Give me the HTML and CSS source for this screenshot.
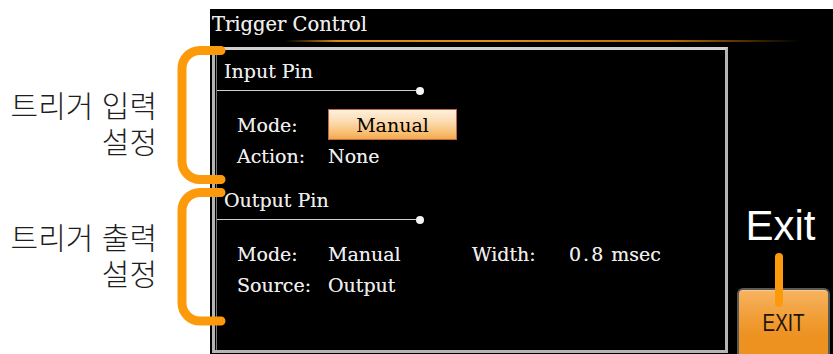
FILE: index.html
```html
<!DOCTYPE html>
<html lang="ko">
<head>
<meta charset="utf-8">
<title>Trigger Control</title>
<link rel="stylesheet" href="styles.css">
</head>
<body>
<div class="page">
  <aside class="notes">
    <p class="note">트리거 입력<br>설정</p>
    <p class="note note-out">트리거 출력<br>설정</p>
  </aside>
  <main class="screen">
    <header class="title">Trigger Control</header>
    <div class="title-rule"></div>
    <div class="body">
      <section class="panel">
        <div class="group">
          <h2 class="group-head">Input Pin</h2>
          <div class="pin-rule"></div>
          <div class="rows">
            <div class="row"><span class="k">Mode:</span><span class="btn-manual">Manual</span></div>
            <div class="row"><span class="k">Action:</span><span class="v">None</span></div>
          </div>
        </div>
        <div class="group">
          <h2 class="group-head">Output Pin</h2>
          <div class="pin-rule"></div>
          <div class="rows">
            <div class="row"><span class="k">Mode:</span><span class="v">Manual</span><span class="k2">Width:</span><span class="v2"><span class="num">0.8</span> msec</span></div>
            <div class="row"><span class="k">Source:</span><span class="v">Output</span></div>
          </div>
        </div>
      </section>
      <aside class="side">
        <div class="exit-label">Exit</div>
        <div class="exit-btn"><span>EXIT</span></div>
      </aside>
    </div>
  </main>
  <svg class="brackets" width="833" height="354" viewBox="0 0 833 354" aria-hidden="true">
    <path d="M221 50.5 H200 A18 18 0 0 0 182 68.5 V161.5 A18 18 0 0 0 200 179.5 H221" />
    <path d="M221 192.5 H200 A18 18 0 0 0 182 210.5 V303 A18 18 0 0 0 200 321 H221" />
  </svg>
  <div class="connector"></div>
</div>
</body>
</html>
```

FILE: styles.css
```css
html, body {
  margin: 0;
  padding: 0;
  background: #fff;
}

.page {
  position: relative;
  display: flex;
  width: 833px;
  height: 354px;
  overflow: hidden;
}

.notes {
  width: 210px;
  flex: none;
  padding-top: 86px;
  box-sizing: border-box;
}

.note {
  margin: 0;
  padding-right: 53px;
  text-align: right;
  font-family: "Noto Sans CJK KR", "Noto Sans", sans-serif;
  font-weight: 300;
  font-size: 30px;
  line-height: 36px;
  color: #1e1e1e;
}

.note-out {
  margin-top: 60px;
}

.screen {
  flex: 1;
  margin-top: 9px;
  height: 345px;
  background: #000;
  overflow: hidden;
  padding-top: 5px;
  box-sizing: border-box;
  font-family: "DejaVu Serif", serif;
  color: #ededed;
  text-shadow: 0 0 0.5px rgba(255,255,255,0.6);
}

.title {
  font-size: 19.5px;
  line-height: 22px;
  padding-left: 2px;
}

.title-rule {
  margin: 4px 0 0 75px;
  width: 515px;
  height: 2px;
  background: linear-gradient(90deg, rgba(200,120,10,0) 0%, #d98810 10%, #e09018 40%, #b86e00 75%, rgba(120,70,0,0) 100%);
}

.body {
  display: flex;
  margin-top: 5px;
  height: 307px;
}

.panel {
  width: 516px;
  height: 306px;
  margin-left: 2px;
  box-sizing: border-box;
  border: 3px solid #b4b4b4;
  border-top-color: #d0d0d0;
  box-shadow: inset 1px 0 0 #000, inset 2px 0 0 #777;
  padding: 10px 0 0 2px;
}

.group + .group {
  margin-top: 18px;
}

.group-head {
  margin: 0;
  font-weight: normal;
  font-size: 19px;
  line-height: 22px;
  padding-left: 7px;
}

.pin-rule {
  position: relative;
  margin-top: 8px;
  width: 203px;
  height: 1px;
  background: #cfcfcf;
}

.pin-rule::after {
  content: "";
  position: absolute;
  right: -4px;
  top: -3.5px;
  width: 8px;
  height: 8px;
  border-radius: 50%;
  background: #f4f4f4;
}

.rows {
  margin-top: 18px;
  padding-left: 20px;
}

.row {
  display: flex;
  align-items: center;
  height: 31px;
  font-size: 19px;
  line-height: 22px;
}

.k {
  width: 91px;
  flex: none;
}

.v {
  width: 144px;
  flex: none;
}

.k2 {
  width: 97px;
  flex: none;
}

.num {
  letter-spacing: 2px;
}

.btn-manual {
  width: 129px;
  height: 31px;
  box-sizing: border-box;
  border: 1px solid #b8684c;
  background: linear-gradient(180deg, #fff0dc 0%, #fcdcb2 40%, #f8bd70 80%, #f4a848 100%);
  color: #000;
  text-shadow: none;
  text-align: center;
  line-height: 30px;
}

.side {
  flex: 1;
  display: flex;
  flex-direction: column;
  padding-top: 158px;
}

.exit-label {
  font-family: "Liberation Sans", Arial, sans-serif;
  font-size: 42px;
  line-height: 42px;
  text-align: center;
  color: #fff;
  text-shadow: none;
}

.exit-btn {
  margin: 41px 0 0 9px;
  width: 93px;
  height: 80px;
  flex: none;
  box-sizing: border-box;
  border: 2px solid #5a5a5a;
  border-radius: 6px;
  background: linear-gradient(180deg, #f7b462 0%, #f3a443 25%, #ee9424 55%, #ec8e1c 100%);
  box-shadow: inset 0 1px 0 #f9c98c;
  padding-top: 22px;
  text-align: center;
  text-shadow: none;
}

.exit-btn span {
  display: inline-block;
  font-family: "Liberation Sans", Arial, sans-serif;
  font-size: 23px;
  line-height: 23px;
  color: #1c1408;
  transform: scaleX(0.82);
}

.brackets {
  position: absolute;
  left: 0;
  top: 0;
  pointer-events: none;
}

.brackets path {
  fill: none;
  stroke: #fd9a0c;
  stroke-width: 9;
  stroke-linecap: round;
  stroke-linejoin: round;
}

.connector {
  position: absolute;
  left: 775px;
  top: 253px;
  width: 8px;
  height: 54px;
  border-radius: 4px;
  background: #fd9a0c;
}
```
